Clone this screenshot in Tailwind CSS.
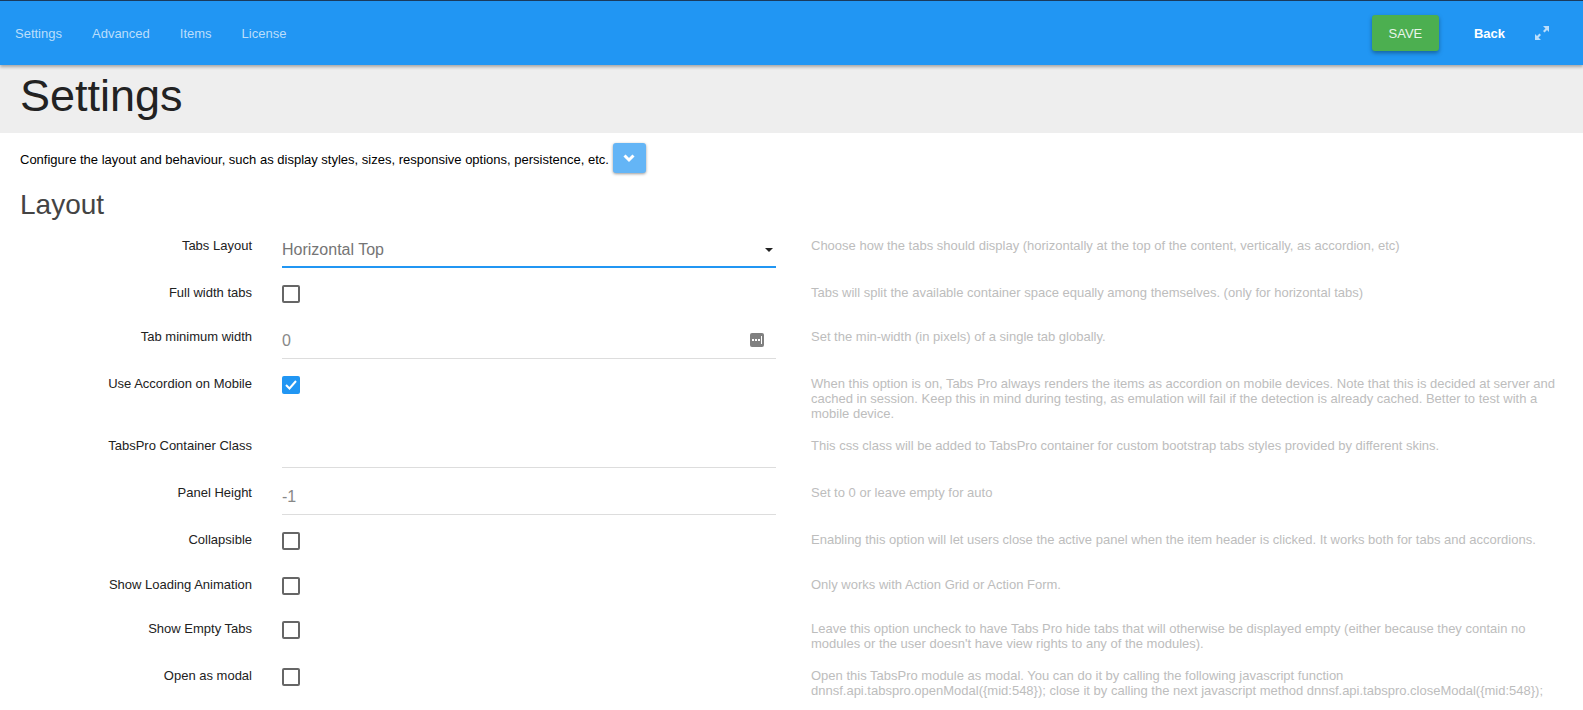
<!DOCTYPE html>
<html><head><meta charset="utf-8"><script src="https://cdn.jsdelivr.net/npm/@tailwindcss/browser@4"></script></head>
<body class="bg-white font-['Liberation_Sans',Arial,sans-serif] text-[13px] leading-[15px] overflow-hidden h-[710px]">
<header class="h-[65px] bg-[#2196f3] border-t border-[#1a3a5c] flex items-center shadow-[0_2px_3px_rgba(0,0,0,0.3)] relative z-10">
  <nav class="flex items-center gap-[30px] pl-[15px] text-[#bbdefb]">
    <span>Settings</span><span>Advanced</span><span>Items</span><span>License</span>
  </nav>
  <div class="ml-auto flex items-center">
    <button class="w-[67px] h-[36px] rounded-[3px] bg-[#4caf50] text-[#e8f5e9] shadow-[0_2px_4px_rgba(0,0,0,0.35)]">SAVE</button>
    <span class="ml-[35px] text-white font-bold">Back</span>
    <svg class="ml-[30px] mr-[34px] w-[14px] h-[14px]" viewBox="0 0 14 14" fill="#bbdefb"><path d="M8 0h6v6l-2-2-2.500 2.500-1.500-1.500 2.500-2.500zM6 14H0V8l2 2 2.500-2.500 1.500 1.500-2.500 2.500z"/></svg>
  </div>
</header>
<div class="h-[68px] bg-[#eee] pl-[20px]"><h1 class="text-[45px] leading-[62px] text-[#222]">Settings</h1></div>
<div class="pl-[20px] h-[52px] flex items-center text-black">
  <span>Configure the layout and behaviour, such as display styles, sizes, responsive options, persistence, etc.</span>
  <span class="ml-[4px] mb-[2px] w-[33px] h-[30px] rounded-[3px] bg-[#64b5f6] flex items-center justify-center shadow-[0_1px_3px_rgba(0,0,0,0.4)]"><svg class="w-[12px] h-[9px]" viewBox="0 0 12 9" fill="none" stroke="white" stroke-width="3"><path d="M1.500 1.500l4.500 4.500 4.500-4.500"/></svg></span>
</div>
<h2 class="pl-[20px] text-[28px] leading-[36px] text-[#444] mt-[2px]">Layout</h2>
<main class="mt-[13px] text-[#222]">
  <div class="grid grid-cols-[252px_494px_1fr] gap-x-[30px] h-[47px] pr-[12px]">
    <label class="text-right pt-[2px]">Tabs Layout</label>
    <div class="h-[32px] border-b-2 border-[#2196f3] flex items-center justify-between text-[16px] text-[#757575]">
      <span class="pb-[3px]">Horizontal Top</span>
      <span class="w-0 h-0 mb-[3px] mr-[3px] border-x-[4px] border-x-transparent border-t-[4px] border-t-[#222]"></span>
    </div>
    <p class="pl-[5px] pt-[2px] text-[#bdbdbd]">Choose how the tabs should display (horizontally at the top of the content, vertically, as accordion, etc)</p>
  </div>
  <div class="grid grid-cols-[252px_494px_1fr] gap-x-[30px] h-[44px] pr-[12px]">
    <label class="text-right pt-[2px]">Full width tabs</label>
    <div><span class="block w-[18px] h-[18px] mt-[2px] rounded-[2px] border-2 border-[#666]"></span></div>
    <p class="pl-[5px] pt-[2px] text-[#bdbdbd]">Tabs will split the available container space equally among themselves. (only for horizontal tabs)</p>
  </div>
  <div class="grid grid-cols-[252px_494px_1fr] gap-x-[30px] h-[47px] pr-[12px]">
    <label class="text-right pt-[2px]">Tab minimum width</label>
    <div class="h-[32px] border-b border-[#ddd] flex items-center justify-between text-[16px] text-[#888]">
      <span class="pb-[5px]">0</span>
      <svg class="w-[14px] h-[14px] mr-[12px] mb-[6px]" viewBox="0 0 14 14"><rect width="14" height="14" rx="2" fill="#808080"/><g fill="#fff"><rect x="2" y="6" width="2" height="2"/><rect x="5" y="6" width="2" height="2"/><rect x="8" y="6" width="2" height="2"/><rect x="11" y="3" width="1" height="8"/></g></svg>
    </div>
    <p class="pl-[5px] pt-[2px] text-[#bdbdbd]">Set the min-width (in pixels) of a single tab globally.</p>
  </div>
  <div class="grid grid-cols-[252px_494px_1fr] gap-x-[30px] h-[62px] pr-[12px]">
    <label class="text-right pt-[2px]">Use Accordion on Mobile</label>
    <div><span class="flex items-center justify-center w-[18px] h-[18px] mt-[2px] rounded-[2px] bg-[#2196f3]"><svg class="w-[12px] h-[10px]" viewBox="0 0 12 10" fill="none" stroke="white" stroke-width="2"><path d="M1 5l3.500 3.500 6.500-7.500"/></svg></span></div>
    <p class="pl-[5px] pt-[2px] text-[#bdbdbd]">When this option is on, Tabs Pro always renders the items as accordion on mobile devices. Note that this is decided at server and cached in session. Keep this in mind during testing, as emulation will fail if the detection is already cached. Better to test with a mobile device.</p>
  </div>
  <div class="grid grid-cols-[252px_494px_1fr] gap-x-[30px] h-[47px] pr-[12px]">
    <label class="text-right pt-[2px]">TabsPro Container Class</label>
    <div class="h-[32px] border-b border-[#ddd]"></div>
    <p class="pl-[5px] pt-[2px] text-[#bdbdbd]">This css class will be added to TabsPro container for custom bootstrap tabs styles provided by different skins.</p>
  </div>
  <div class="grid grid-cols-[252px_494px_1fr] gap-x-[30px] h-[47px] pr-[12px]">
    <label class="text-right pt-[2px]">Panel Height</label>
    <div class="h-[32px] border-b border-[#ddd] flex items-center text-[16px] text-[#888]"><span class="pb-[5px]">-1</span></div>
    <p class="pl-[5px] pt-[2px] text-[#bdbdbd]">Set to 0 or leave empty for auto</p>
  </div>
  <div class="grid grid-cols-[252px_494px_1fr] gap-x-[30px] h-[45px] pr-[12px]">
    <label class="text-right pt-[2px]">Collapsible</label>
    <div><span class="block w-[18px] h-[18px] mt-[2px] rounded-[2px] border-2 border-[#666]"></span></div>
    <p class="pl-[5px] pt-[2px] text-[#bdbdbd]">Enabling this option will let users close the active panel when the item header is clicked. It works both for tabs and accordions.</p>
  </div>
  <div class="grid grid-cols-[252px_494px_1fr] gap-x-[30px] h-[44px] pr-[12px]">
    <label class="text-right pt-[2px]">Show Loading Animation</label>
    <div><span class="block w-[18px] h-[18px] mt-[2px] rounded-[2px] border-2 border-[#666]"></span></div>
    <p class="pl-[5px] pt-[2px] text-[#bdbdbd]">Only works with Action Grid or Action Form.</p>
  </div>
  <div class="grid grid-cols-[252px_494px_1fr] gap-x-[30px] h-[47px] pr-[12px]">
    <label class="text-right pt-[2px]">Show Empty Tabs</label>
    <div><span class="block w-[18px] h-[18px] mt-[2px] rounded-[2px] border-2 border-[#666]"></span></div>
    <p class="pl-[5px] pt-[2px] text-[#bdbdbd]">Leave this option uncheck to have Tabs Pro hide tabs that will otherwise be displayed empty (either because they contain no modules or the user doesn't have view rights to any of the modules).</p>
  </div>
  <div class="grid grid-cols-[252px_494px_1fr] gap-x-[30px] h-[44px] pr-[12px]">
    <label class="text-right pt-[2px]">Open as modal</label>
    <div><span class="block w-[18px] h-[18px] mt-[2px] rounded-[2px] border-2 border-[#666]"></span></div>
    <p class="pl-[5px] pt-[2px] text-[#bdbdbd]">Open this TabsPro module as modal. You can do it by calling the following javascript function<br>dnnsf.api.tabspro.openModal({mid:548}); close it by calling the next javascript method dnnsf.api.tabspro.closeModal({mid:548});</p>
  </div>
</main>
</body></html>
